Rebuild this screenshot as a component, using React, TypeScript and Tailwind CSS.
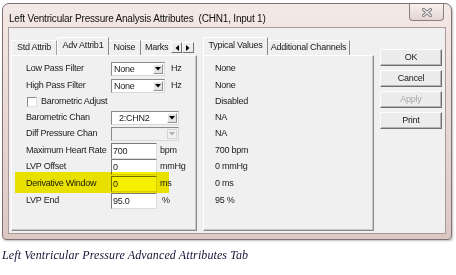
import React from "react";

const ui = "font-['Liberation_Sans',Arial,sans-serif] text-[9px] tracking-[-0.25px] text-[#1a1a1a]";

function Combo({ value, disabled, w, pad = "pl-[2px]" }: { value: string; disabled?: boolean; w: string; pad?: string }) {
  return (
    <div className={`${w} h-[14px] flex items-center border border-t-[#8a8a8a] border-l-[#8a8a8a] border-b-[#d8d8d8] border-r-[#d8d8d8] ${disabled ? "bg-[#f0f0f0]" : "bg-white"}`}>
      <div className={`flex-1 ${pad} leading-[12px] overflow-hidden whitespace-nowrap`}>{value}</div>
      <div className={`w-[10px] h-[10px] mr-[1px] flex items-center justify-center border ${disabled ? "border-[#d6d6d6] bg-[#f0f0f0]" : "border-t-white border-l-white border-b-[#909090] border-r-[#909090] bg-[#e4e4e4]"}`}>
        <svg width="6" height="4" viewBox="0 0 6 4">
          <path d="M0 0 L6 0 L3 3.5 Z" fill={disabled ? "#b0b0b0" : "#000"} />
        </svg>
      </div>
    </div>
  );
}

function Input({ value }: { value: string }) {
  return (
    <div className="w-[46px] h-[16px] bg-white border border-t-[#7a7a7a] border-l-[#7a7a7a] border-b-[#dcdcdc] border-r-[#dcdcdc] pl-[1px] leading-[14px]">
      {value}
    </div>
  );
}

function Row({ h, children, cls = "" }: { h: string; children: React.ReactNode; cls?: string }) {
  return <div className={`${h} flex items-center ${cls}`}>{children}</div>;
}

function Btn({ label, disabled }: { label: string; disabled?: boolean }) {
  return (
    <div
      className={`w-[62px] h-[17px] flex items-center justify-center bg-[#ececec] border border-t-[#fdfdfd] border-l-[#fdfdfd] border-b-[#6e6e6e] border-r-[#6e6e6e] shadow-[inset_-1px_-1px_0_#b4b4b4] ${
        disabled ? "text-[#a8a8a8]" : "text-[#1a1a1a]"
      }`}
    >
      {label}
    </div>
  );
}

export default function App() {
  return (
    <div className={`w-[456px] h-[275px] bg-white overflow-hidden ${ui}`}>
      <div className="ml-[2px] mt-[3px] w-[450px] h-[237px] flex flex-col px-[5px] pb-[5px] rounded-t-[7px] rounded-b-[4px] border border-[#7d7373] bg-gradient-to-b from-[#f4e9e6] via-[#e9d7d3] to-[#dcc7c3] shadow-[1px_1px_2px_rgba(0,0,0,0.25)]">
        <div className="h-[23px] flex items-start justify-between">
          <span className="pt-[9px] pl-[1px] text-[10px] tracking-[-0.2px] text-[#111] leading-[11px]">
            Left Ventricular Pressure Analysis Attributes&nbsp; (CHN1, Input 1)
          </span>
          <div className="mr-[2px] w-[35px] h-[17px] flex items-center justify-center rounded-b-[4px] border border-t-0 border-[#8a7f7f] bg-gradient-to-b from-[#f8f1ef] to-[#e4d5d2]">
            <svg width="10" height="9" viewBox="0 0 10 9">
              <path d="M1.5 1.5 L8.5 7.5 M8.5 1.5 L1.5 7.5" stroke="#7a7a7a" strokeWidth="3" strokeLinecap="square" />
              <path d="M1.5 1.5 L8.5 7.5 M8.5 1.5 L1.5 7.5" stroke="#f4f4f4" strokeWidth="1.2" strokeLinecap="square" />
            </svg>
          </div>
        </div>

        <div className="flex-1 flex bg-[#f0f0f0] border border-[#a79a98] pt-[9px] pl-[2px]">
          {/* Left tab control */}
          <div className="w-[186px] flex flex-col h-[194px]">
            <div className="h-[18px] flex items-end">
              <div className="w-[160px] flex items-end overflow-hidden h-[18px]">
                <div className="w-[46px] h-[15px] shrink-0 flex items-center justify-center border-t border-l border-white border-r border-r-[#a0a0a0]">Std Attrib</div>
                <div className="w-[52px] h-[18px] shrink-0 flex items-center justify-center pb-[2px] border-t border-l border-white border-r border-r-[#8a8a8a] bg-[#f0f0f0]">Adv Attrib1</div>
                <div className="w-[32px] h-[15px] shrink-0 flex items-center justify-center border-t border-white border-r border-r-[#8a8a8a]">Noise</div>
                <div className="w-[40px] h-[15px] shrink-0 flex items-center pl-[4px] border-t border-white">Marks</div>
              </div>
              <div className="flex mb-[2px]">
                <div className="w-[11px] h-[11px] flex items-center justify-center bg-[#ececec] border border-t-white border-l-white border-b-[#707070] border-r-[#707070]">
                  <svg width="4" height="6" viewBox="0 0 4 6"><path d="M4 0 L4 6 L0.5 3 Z" fill="#000" /></svg>
                </div>
                <div className="w-[12px] h-[11px] flex items-center justify-center bg-[#ececec] border border-t-white border-l-white border-b-[#707070] border-r-[#707070]">
                  <svg width="4" height="6" viewBox="0 0 4 6"><path d="M0 0 L0 6 L3.5 3 Z" fill="#000" /></svg>
                </div>
              </div>
            </div>
            <div className="flex-1 border border-t-white border-l-white border-b-[#8a8a8a] border-r-[#8a8a8a] shadow-[inset_-1px_-1px_0_#c8c8c8] pt-[4px] pl-[14px]">
              <Row h="h-[17px]">
                <span className="w-[85px]">Low Pass Filter</span>
                <Combo value="None" w="w-[54px]" />
                <span className="ml-[6px]">Hz</span>
              </Row>
              <Row h="h-[17px]">
                <span className="w-[85px]">High Pass Filter</span>
                <Combo value="None" w="w-[54px]" />
                <span className="ml-[6px]">Hz</span>
              </Row>
              <Row h="h-[16px]">
                <div className="ml-[1px] w-[10px] h-[10px] bg-white border border-t-[#8a8a8a] border-l-[#8a8a8a] border-b-[#e0e0e0] border-r-[#e0e0e0]" />
                <span className="ml-[4px]">Barometric Adjust</span>
              </Row>
              <Row h="h-[16px]">
                <span className="w-[85px]">Barometric Chan</span>
                <Combo value="2:CHN2" w="w-[68px]" pad="pl-[7px]" />
              </Row>
              <Row h="h-[16px]">
                <span className="w-[85px]">Diff Pressure Chan</span>
                <Combo value="" disabled w="w-[68px]" />
              </Row>
              <Row h="h-[17px]">
                <span className="w-[85px]">Maximum Heart Rate</span>
                <Input value="700" />
                <span className="ml-[3px]">bpm</span>
              </Row>
              <Row h="h-[16px]">
                <span className="w-[85px]">LVP Offset</span>
                <Input value="0" />
                <span className="ml-[3px]">mmHg</span>
              </Row>
              <Row h="h-[17px]" cls="relative">
                <span className="w-[85px]">Derivative Window</span>
                <Input value="0" />
                <span className="ml-[3px]">ms</span>
                <div className="absolute left-[-11px] top-[-3px] w-[154px] h-[21px] bg-[#f7ef00] mix-blend-multiply" />
              </Row>
              <Row h="h-[17px]">
                <span className="w-[85px]">LVP End</span>
                <Input value="95.0" />
                <span className="ml-[5px]">%</span>
              </Row>
            </div>
          </div>

          {/* Right tab control */}
          <div className="ml-[6px] w-[171px] flex flex-col h-[194px]">
            <div className="h-[18px] flex items-end">
              <div className="w-[65px] h-[18px] shrink-0 flex items-center justify-center pb-[2px] border-t border-l border-white border-r border-r-[#8a8a8a]">Typical Values</div>
              <div className="w-[82px] h-[15px] shrink-0 flex items-center justify-center border-t border-white border-r border-r-[#8a8a8a]">Additional Channels</div>
            </div>
            <div className="flex-1 border border-t-white border-l-white border-b-[#8a8a8a] border-r-[#8a8a8a] shadow-[inset_-1px_-1px_0_#c8c8c8] pt-[4px] pl-[11px]">
              <Row h="h-[17px]">None</Row>
              <Row h="h-[17px]">None</Row>
              <Row h="h-[16px]">Disabled</Row>
              <Row h="h-[16px]">NA</Row>
              <Row h="h-[16px]">NA</Row>
              <Row h="h-[17px]">700 bpm</Row>
              <Row h="h-[16px]">0 mmHg</Row>
              <Row h="h-[17px]">0 ms</Row>
              <Row h="h-[17px]">95 %</Row>
            </div>
          </div>

          {/* Buttons */}
          <div className="ml-[6px] pt-[12px] flex flex-col gap-[4px]">
            <Btn label="OK" />
            <Btn label="Cancel" />
            <Btn label="Apply" disabled />
            <Btn label="Print" />
          </div>
        </div>
      </div>
      <div className="mt-[8px] ml-[2px] font-['Liberation_Serif',serif] italic text-[12px] tracking-[0.1px] leading-[14px] text-[#141438]">
        Left Ventricular Pressure Advanced Attributes Tab
      </div>
    </div>
  );
}
